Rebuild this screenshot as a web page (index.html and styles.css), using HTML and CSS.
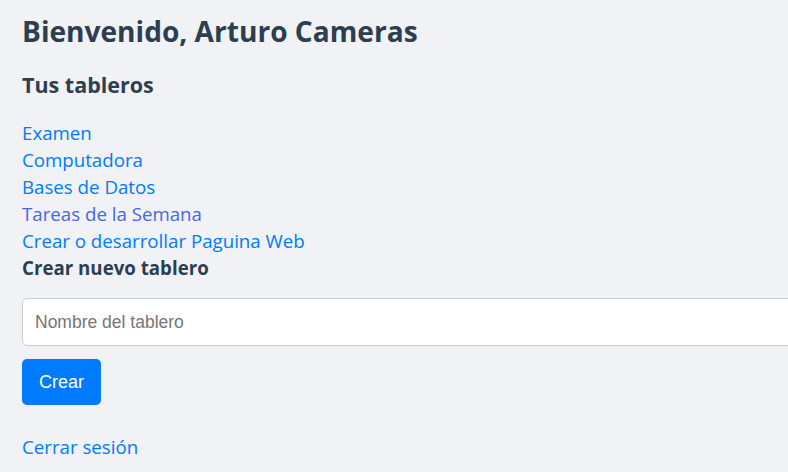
FILE: index.html
```html
<!DOCTYPE html>
<html lang="es">
<head>
<meta charset="utf-8">
<title>Tableros</title>
<link rel="stylesheet" href="styles.css">
</head>
<body>
<main class="page">
  <h1 class="title">Bienvenido, Arturo Cameras</h1>
  <h2 class="subtitle">Tus tableros</h2>
  <ul class="boards">
    <li><a class="link" href="#">Examen</a></li>
    <li><a class="link" href="#">Computadora</a></li>
    <li><a class="link" href="#">Bases de Datos</a></li>
    <li><a class="link link-visited" href="#">Tareas de la Semana</a></li>
    <li><a class="link" href="#">Crear o desarrollar Paguina Web</a></li>
  </ul>
  <h3 class="new-title">Crear nuevo tablero</h3>
  <form class="new-form">
    <input class="input" type="text" placeholder="Nombre del tablero">
    <button class="btn" type="button">Crear</button>
  </form>
  <a class="link logout" href="#">Cerrar sesión</a>
</main>
</body>
</html>
```
FILE: styles.css
```css
html, body {
  margin: 0;
  padding: 0;
  background: #f0f2f5;
  overflow: hidden;
}
body {
  font-family: "Open Sans", "Noto Sans", sans-serif;
  color: #2c3e50;
}
.page {
  padding: 10px 22px 0 22px;
  display: flex;
  flex-direction: column;
  align-items: flex-start;
}
.title {
  margin: 0;
  font-size: 28.1px;
  font-weight: 700;
  line-height: 42px;
}
.subtitle {
  margin: 19px 0 0 0;
  font-size: 21.5px;
  font-weight: 700;
  line-height: 28px;
}
.boards {
  list-style: none;
  margin: 20px 0 0 0;
  padding: 0;
  font-size: 18.7px;
}
.boards li {
  line-height: 27px;
}
.link {
  color: #007bff;
  text-decoration: none;
  font-size: 18.7px;
}
.link-visited {
  color: #4566ee;
}
.new-title {
  margin: 0;
  font-size: 18.7px;
  font-weight: 700;
  line-height: 27px;
}
.new-form {
  display: flex;
  flex-direction: column;
  align-items: flex-start;
  gap: 13px;
  margin-top: 17px;
}
.input {
  width: 800px;
  height: 48px;
  box-sizing: border-box;
  border: 1px solid #cccccc;
  border-radius: 5px;
  background: #ffffff;
  padding: 0 12px;
  font-family: "Liberation Sans", Arial, sans-serif;
  font-size: 17.5px;
  color: #333;
}
.input::placeholder {
  color: #757575;
}
.btn {
  width: 79px;
  height: 46px;
  border: none;
  border-radius: 5px;
  background: #007bff;
  color: #ffffff;
  font-family: "Liberation Sans", Arial, sans-serif;
  font-size: 18px;
  cursor: pointer;
}
.logout {
  margin-top: 30px;
  line-height: 24px;
}
```
